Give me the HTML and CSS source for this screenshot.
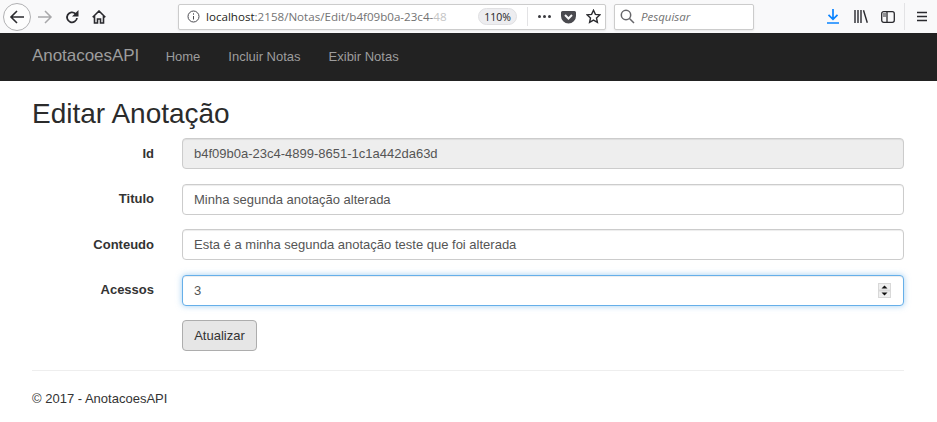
FILE: index.html
```html
<!DOCTYPE html>
<html lang="pt">
<head>
<meta charset="utf-8">
<title>Editar Anotação</title>
<link rel="stylesheet" href="styles.css">
</head>
<body>
<div class="toolbar">
  <div class="nav-buttons">
    <span class="back"><svg width="16" height="16" viewBox="0 0 16 16" fill="none" stroke="#2a2a2e" stroke-width="1.6"><path d="M15 8H2M8 2 2 8l6 6"/></svg></span>
    <svg class="forward" width="16" height="16" viewBox="0 0 16 16" fill="none" stroke="#a8a8aa" stroke-width="1.5"><path d="M1 8h13M8 2l6 6-6 6"/></svg>
    <svg class="reload" width="14" height="14" viewBox="0 0 14 14" fill="none" stroke="#2a2a2e" stroke-width="1.8"><path d="M12 8a5 5 0 1 1-1.6-4.4L12.500 5.500"/><path d="M13.500 0v6.500H7z" stroke="none" fill="#2a2a2e"/></svg>
    <svg class="home" width="14" height="14" viewBox="0 0 14 14" fill="none" stroke="#2a2a2e" stroke-width="1.600"><path d="M.7 7.200 7 1l6.300 6.200M2.500 6v7h3V9h3v4h3V6"/></svg>
  </div>
  <div class="urlbar">
    <svg class="info" width="13" height="13" viewBox="0 0 13 13" fill="none" stroke="#4a4a4f"><circle cx="6.500" cy="6.500" r="5.500"/><path d="M6.500 6v3.500M6.500 3.300v1.400"/></svg>
    <span class="url"><b>localhost</b>:2158/Notas/Edit/b4f09b0a-23c4-<i>48</i></span>
    <span class="zoom">110%</span>
    <span class="url-sep"></span>
    <span class="dots"><i></i><i></i><i></i></span>
    <svg class="pocket" width="15" height="14" viewBox="0 0 15 14"><path d="M1.500 1h12A1.500 1.500 0 0 1 15 2.500V6A7.500 7.500 0 0 1 0 6V2.500A1.500 1.500 0 0 1 1.500 1z" fill="#4a4a4f"/><path d="M4 5l3.500 3.500L11 5" fill="none" stroke="#f9f9fa" stroke-width="2"/></svg>
    <svg class="star" width="15" height="15" viewBox="0 0 15 15" fill="none" stroke="#2a2a2e" stroke-width="1.400"><path d="M7.500 1.300 9.400 5.400l4.400.5-3.300 3 .9 4.400-3.900-2.200-3.900 2.200.9-4.400-3.300-3 4.400-.5z"/></svg>
  </div>
  <div class="search">
    <svg width="15" height="15" viewBox="0 0 15 15" fill="none" stroke="#66666a" stroke-width="1.500"><circle cx="6" cy="6" r="4.700"/><path d="m9.500 9.500 4.500 4.500"/></svg>
    <span>Pesquisar</span>
  </div>
  <div class="tools">
    <svg class="download" width="12" height="15" viewBox="0 0 12 15" fill="none" stroke="#0a84ff" stroke-width="1.700"><path d="M6 0v10M1.500 5.800 6 10.300l4.500-4.500M0 14h12"/></svg>
    <svg class="library" width="14" height="13" viewBox="0 0 14 13" fill="none" stroke="#2a2a2e" stroke-width="1.400"><path d="M1 0v13M4 0v13M7 0v13M9.500.3l3.800 12.500"/></svg>
    <svg class="sidebar" width="14" height="12" viewBox="0 0 14 12" fill="none" stroke="#2a2a2e" stroke-width="1.300"><rect x=".7" y=".7" width="12.600" height="10.600" rx="2"/><path d="M6 1v10"/><path d="M2 3h3M2 5h3" stroke-width="1"/></svg>
    <span class="tool-sep"></span>
    <svg class="menu" width="12" height="11" viewBox="0 0 12 11" stroke="#2a2a2e" stroke-width="1.500"><path d="M1 1.500h10M1 5.500h10M1 9.500h10"/></svg>
  </div>
</div>

<nav class="navbar">
  <a class="brand">AnotacoesAPI</a>
  <a class="nav-link">Home</a>
  <a class="nav-link">Incluir Notas</a>
  <a class="nav-link">Exibir Notas</a>
</nav>

<main class="content">
  <h2 class="title">Editar Anotação</h2>
  <form class="form">
    <label class="label" for="id">Id</label>
    <input class="control" id="id" value="b4f09b0a-23c4-4899-8651-1c1a442da63d" readonly>
    <label class="label" for="titulo">Titulo</label>
    <input class="control" id="titulo" value="Minha segunda anotação alterada">
    <label class="label" for="conteudo">Conteudo</label>
    <input class="control" id="conteudo" value="Esta é a minha segunda anotação teste que foi alterada">
    <label class="label" for="acessos">Acessos</label>
    <div class="control focus">
      <span>3</span>
      <span class="spinner"><svg width="13" height="15" viewBox="0 0 13 15"><rect width="13" height="15" fill="#d8d8d8"/><rect x="1" y="1" width="11" height="5.500" fill="#efefef"/><rect x="1" y="8.500" width="11" height="5.500" fill="#efefef"/><path d="M3.500 5.500 6.500 2.500 9.500 5.500z" fill="#111"/><path d="M3.500 9.500 6.500 12.500 9.500 9.500z" fill="#111"/></svg></span>
    </div>
    <span></span>
    <div><button class="btn" type="button">Atualizar</button></div>
  </form>
  <hr class="rule">
  <footer class="footer">© 2017 - AnotacoesAPI</footer>
</main>
</body>
</html>
```

FILE: styles.css
```css
* { box-sizing: border-box; }
html, body { margin: 0; height: 100%; background: #fff; overflow: hidden; }
body { font-family: "Liberation Sans", Arial, sans-serif; font-size: 13px; color: #333; }

.toolbar { height: 33px; background: #f9f9fa; display: flex; align-items: center; }
.nav-buttons { display: flex; align-items: center; width: 178px; padding-left: 3px; }
.back { width: 28px; height: 28px; border: 1px solid #b1b1b3; border-radius: 50%; background: #fdfdfd; display: flex; align-items: center; justify-content: center; flex: none; }
.forward { margin-left: 6px; }
.reload { margin-left: 12px; }
.home { margin-left: 13px; }

.urlbar { width: 428px; height: 26px; background: #fff; border: 1px solid #ccc; border-radius: 2px; display: flex; align-items: center; padding-left: 8px; box-shadow: 0 1px 2px rgba(0,0,0,.08); }
.url { margin-left: 6px; width: 264px; white-space: nowrap; overflow: hidden; font-family: "Open Sans", "Noto Sans", sans-serif; font-size: 11.600px; color: #737373; flex: none; }
.url b { font-weight: 400; color: #1f1f22; }
.url i { font-style: normal; color: #c4c4c4; }
.zoom { width: 39px; height: 17px; margin-left: 8px; border-radius: 9px; background: #ededf0; border: 1px solid #e0e0e2; color: #222; font-family: "Open Sans", "Noto Sans", sans-serif; font-size: 10.500px; display: flex; align-items: center; justify-content: center; flex: none; }
.url-sep { width: 1px; height: 19px; background: #e3e3e5; margin-left: 10px; flex: none; }
.dots { display: flex; gap: 2px; margin-left: 10px; }
.dots i { width: 3px; height: 3px; border-radius: 50%; background: #3a3a3e; }
.pocket { margin-left: 10px; }
.star { margin-left: 10px; }

.search { width: 140px; height: 26px; margin-left: 8px; background: #fff; border: 1px solid #ccc; border-radius: 2px; display: flex; align-items: center; padding-left: 5px; gap: 6px; box-shadow: 0 1px 2px rgba(0,0,0,.08); }
.search span { font-family: "Open Sans", "Noto Sans", sans-serif; font-style: italic; font-size: 11.500px; color: #737373; }

.tools { display: flex; align-items: center; padding-left: 73px; }
.library { margin-left: 15px; }
.sidebar { margin-left: 13px; }
.tool-sep { width: 1px; height: 27px; background: #e3e3e5; margin-left: 9px; }
.menu { margin-left: 11px; }

.navbar { height: 48px; background: #222; display: flex; align-items: center; padding: 0 0 2px 32px; }
.brand { font-size: 17px; letter-spacing: -.05px; color: #9d9d9d; margin-right: 26.500px; }
.nav-link { font-size: 13px; color: #9d9d9d; margin-right: 28px; }

.content { padding: 0 33px 0 32px; }
.title { margin: 15px 0 0; height: 42px; font-size: 28px; line-height: 35px; font-weight: 400; color: #2b2b2b; }
.form { display: grid; grid-template-columns: 122px 1fr; column-gap: 28px; row-gap: 14.500px; align-items: center; }
.label { font-weight: 700; text-align: right; color: #333; position: relative; top: -.500px; }
.control { width: 100%; height: 31px; padding: 0 11px; border: 1px solid #ccc; border-radius: 4px; background: #fff; font: inherit; color: #555; box-shadow: inset 0 1px 1px rgba(0,0,0,.075); outline: none; }
.control[readonly] { background: #eee; }
.focus { display: flex; align-items: center; justify-content: space-between; padding-right: 12px; border-color: #66afe9; box-shadow: inset 0 1px 1px rgba(0,0,0,.075), 0 0 6px rgba(102,175,233,.6); }
.spinner { display: flex; }
.btn { height: 31px; width: 75px; padding: 0; font: inherit; color: #333; background: #e6e6e6; border: 1px solid #adadad; border-radius: 4px; }
.rule { margin: 19px 0 0; border: 0; border-top: 1px solid #eee; }
.footer { margin-top: 20px; color: #333; }
```
